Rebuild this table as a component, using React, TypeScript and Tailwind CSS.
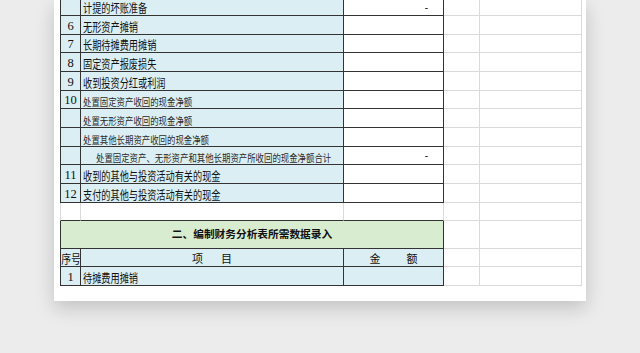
import React from 'react';

type Row = {
  seq?: string;
  text: string;
  small?: boolean;
  indent?: boolean;
  dash?: boolean;
  top?: boolean;
};

const rows: Row[] = [
  { text: '计提的坏账准备', dash: true, top: true },
  { seq: '6', text: '无形资产摊销' },
  { seq: '7', text: '长期待摊费用摊销' },
  { seq: '8', text: '固定资产报废损失' },
  { seq: '9', text: '收到投资分红或利润' },
  { seq: '10', text: '处置固定资产收回的现金净额', small: true },
  { text: '处置无形资产收回的现金净额', small: true },
  { text: '处置其他长期资产收回的现金净额', small: true },
  { text: '处置固定资产、无形资产和其他长期资产所收回的现金净额合计', small: true, indent: true, dash: true },
  { seq: '11', text: '收到的其他与投资活动有关的现金' },
  { seq: '12', text: '支付的其他与投资活动有关的现金' },
];

// light excel gridlines right of the table
function Grid() {
  return (
    <>
      <div className="w-[36px] shrink-0 border-r border-b border-[#dadada]" />
      <div className="w-[102px] shrink-0 border-r border-b border-[#dadada]" />
    </>
  );
}

function DataRow({ row }: { row: Row }) {
  return (
    <div className={`flex ${row.top ? 'h-[16px]' : 'h-[18.67px]'}`}>
      <div className="w-[21px] shrink-0 bg-[#daeef3] border-l border-r border-b border-[#333] flex items-end justify-center font-['Liberation_Serif',serif] text-[12.5px] leading-[15px] text-[#111]">
        {row.seq}
      </div>
      <div
        className={`w-[263px] shrink-0 bg-[#daeef3] border-r border-b border-[#333] flex items-end overflow-hidden whitespace-nowrap ${
          row.indent ? 'pl-[15px]' : 'pl-[2px]'
        }`}
      >
        {row.small ? (
          <span className="inline-block origin-left scale-x-[0.84] text-[10px] leading-[13px] text-[#2a2a2a]">{row.text}</span>
        ) : (
          <span className="inline-block origin-left scale-x-[0.74] text-[12.4px] leading-[14px] text-[#111]">{row.text}</span>
        )}
      </div>
      <div className="w-[100px] shrink-0 bg-white border-r border-b border-[#333] flex items-center justify-end pr-[15px] text-[9px] font-bold text-[#222]">
        {row.dash ? '-' : ''}
      </div>
      <Grid />
    </div>
  );
}

export default function App() {
  return (
    <div className="w-[640px] h-[353px] overflow-hidden bg-[#ececec] pl-[54px] font-['Noto_Sans_CJK_SC',sans-serif]">
      <div className="w-[532px] h-[301px] bg-white pl-[6px] overflow-hidden shadow-[0_7px_18px_rgba(0,0,0,0.18)]">
        {rows.map((r, i) => (
          <DataRow key={i} row={r} />
        ))}

        {/* empty spacer row */}
        <div className="flex h-[18.67px]">
          <div className="w-[21px] shrink-0 border-l border-r border-l-[#dadada] border-r-[#dadada] border-b border-b-[#333]" />
          <div className="w-[263px] shrink-0 border-r border-r-[#dadada] border-b border-b-[#333]" />
          <div className="w-[100px] shrink-0 border-r border-r-[#dadada] border-b border-b-[#333]" />
          <Grid />
        </div>

        {/* section title */}
        <div className="flex h-[27.33px]">
          <div className="w-[384px] shrink-0 bg-[#d8ecd0] border-l border-r border-b border-[#333] flex items-center justify-center font-bold text-[10.7px] text-[#111]">
            二、编制财务分析表所需数据录入
          </div>
          <Grid />
        </div>

        {/* header */}
        <div className="flex h-[18.67px]">
          <div className="w-[21px] shrink-0 bg-[#daeef3] border-l border-r border-b border-[#333] flex items-end justify-center overflow-hidden">
            <span className="inline-block scale-x-[0.82] text-[12px] leading-[15px] text-[#111] whitespace-nowrap">序号</span>
          </div>
          <div className="w-[263px] shrink-0 bg-[#daeef3] border-r border-b border-[#333] flex items-end justify-center gap-[18px] text-[11px] leading-[15px] text-[#111]">
            <span>项</span>
            <span>目</span>
          </div>
          <div className="w-[100px] shrink-0 bg-[#daeef3] border-r border-b border-[#333] flex items-end justify-center gap-[26px] text-[11px] leading-[15px] text-[#111]">
            <span>金</span>
            <span>额</span>
          </div>
          <Grid />
        </div>

        <div className="flex h-[18.67px]">
          <div className="w-[21px] shrink-0 bg-[#daeef3] border-l border-r border-b border-[#333] flex items-end justify-center font-['Liberation_Serif',serif] text-[12.5px] leading-[15px] text-[#111]">
            1
          </div>
          <div className="w-[263px] shrink-0 bg-[#daeef3] border-r border-b border-[#333] flex items-end pl-[2px] whitespace-nowrap">
            <span className="inline-block origin-left scale-x-[0.74] text-[12.4px] leading-[14px] text-[#111]">待摊费用摊销</span>
          </div>
          <div className="w-[100px] shrink-0 bg-[#daeef3] border-r border-b border-[#333]" />
          <Grid />
        </div>
      </div>
    </div>
  );
}
